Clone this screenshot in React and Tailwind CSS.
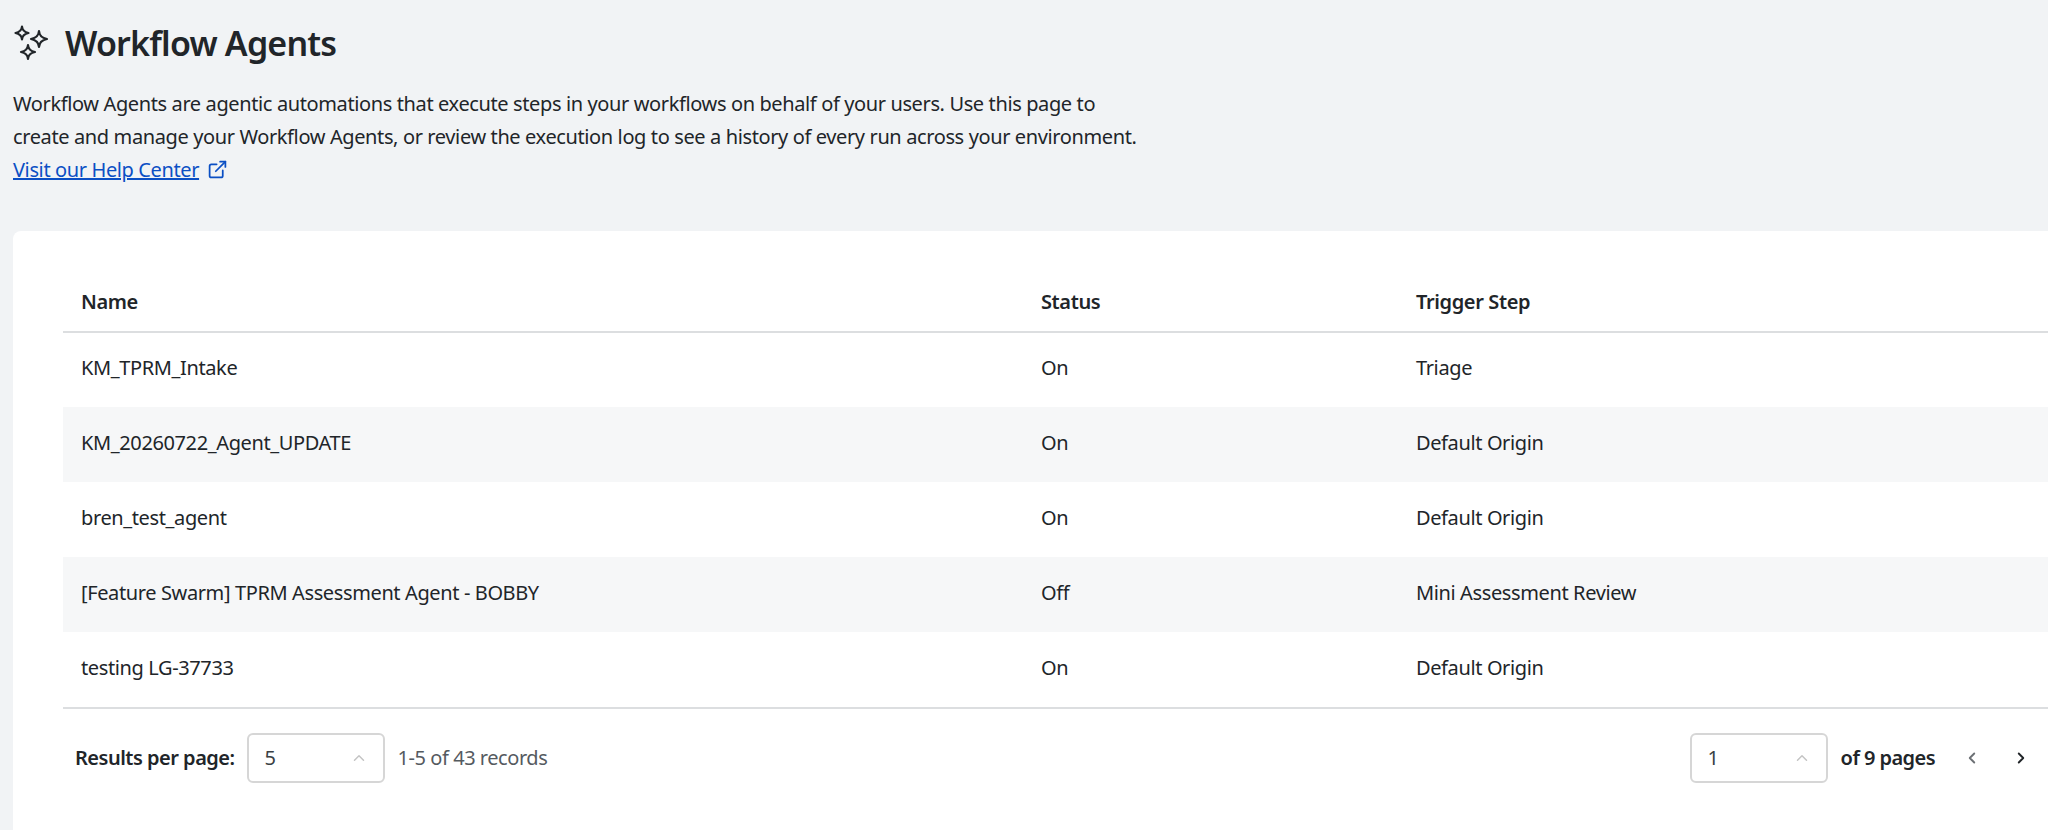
import React from "react";
import { ChevronUp, ChevronLeft, ChevronRight, ExternalLink } from "lucide-react";

const rows = [
  ["KM_TPRM_Intake", "On", "Triage"],
  ["KM_20260722_Agent_UPDATE", "On", "Default Origin"],
  ["bren_test_agent", "On", "Default Origin"],
  ["[Feature Swarm] TPRM Assessment Agent - BOBBY", "Off", "Mini Assessment Review"],
  ["testing LG-37733", "On", "Default Origin"],
];

function Star({ x, y, r }) {
  const k = r * 0.16;
  const d = `M${x} ${y - r} Q${x + k * 0.3} ${y - k * 1.2} ${x + r} ${y} Q${x + k * 0.3} ${y + k * 1.2} ${x} ${y + r} Q${x - k * 0.3} ${y + k * 1.2} ${x - r} ${y} Q${x - k * 0.3} ${y - k * 1.2} ${x} ${y - r} Z`;
  return <path d={d} />;
}

function Sparkles() {
  return (
    <svg width="36" height="36" viewBox="0 0 36 36" fill="none" stroke="#212529" strokeWidth="2.2" strokeLinejoin="round">
      <Star x={9} y={8} r={6.5} />
      <Star x={26} y={14} r={8} />
      <Star x={15} y={27} r={7} />
    </svg>
  );
}

function Select({ value }) {
  return (
    <div className="flex h-[50px] w-[138px] items-center justify-between rounded-[6px] border-2 border-[#d6d6d6] bg-white pl-[16px] pr-[15px] text-[#3a3f44]">
      <span>{value}</span>
      <ChevronUp size={18} strokeWidth={2} className="text-[#c4c4c4]" />
    </div>
  );
}

export default function App() {
  return (
    <div className="h-[830px] w-[2048px] overflow-hidden bg-[#f1f3f5] pl-[13px] text-[20px] tracking-[-0.38px] text-[#212529] [font-family:'Noto_Sans',sans-serif]">
      <div className="flex h-[80px] items-center pt-[6px]">
        <Sparkles />
        <h1 className="ml-[16px] text-[34px] font-semibold tracking-[-0.8px]">Workflow Agents</h1>
      </div>
      <p className="mt-[7px] w-[1200px] leading-[33px]">
        Workflow Agents are agentic automations that execute steps in your workflows on behalf of your users. Use this page to
        <br />
        create and manage your Workflow Agents, or review the execution log to see a history of every run across your environment.
      </p>
      <a className="flex h-[33px] items-center gap-[8px] text-[#0b4fc4]">
        <span className="underline">Visit our Help Center</span>
        <ExternalLink size={21} strokeWidth={2} />
      </a>
      <div className="mt-[45px] h-[640px] rounded-tl-[8px] bg-white pl-[50px]">
        <div className="flex h-[102px] items-center border-b-2 border-[#dcdee0] pt-[42px] font-semibold">
          <div className="w-[978px] pl-[18px]">Name</div>
          <div className="w-[375px]">Status</div>
          <div>Trigger Step</div>
        </div>
        {rows.map((r, i) => (
          <div key={r[0]} className={`flex items-center pb-[4px] ${i % 2 ? "bg-[#f6f7f8]" : "bg-white"} ${i === 0 ? "h-[74px]" : "h-[75px]"}`}>
            <div className="w-[978px] pl-[18px]">{r[0]}</div>
            <div className="w-[375px]">{r[1]}</div>
            <div>{r[2]}</div>
          </div>
        ))}
        <div className="flex h-[100px] items-center border-t-2 border-[#dcdee0] pl-[12px] pr-[18px]">
          <span className="font-semibold tracking-[-0.5px]">Results per page:</span>
          <div className="ml-[12px]"><Select value="5" /></div>
          <span className="ml-[13px] text-[#555a5f] tracking-[-0.45px]">1-5 of 43 records</span>
          <div className="ml-auto flex items-center">
            <Select value="1" />
            <span className="ml-[13px] font-semibold tracking-[-0.55px]">of 9 pages</span>
            <ChevronLeft size={18} strokeWidth={2.5} className="ml-[28px] text-[#6c7074]" />
            <ChevronRight size={18} strokeWidth={2.5} className="ml-[31px] text-[#212529]" />
          </div>
        </div>
      </div>
    </div>
  );
}
